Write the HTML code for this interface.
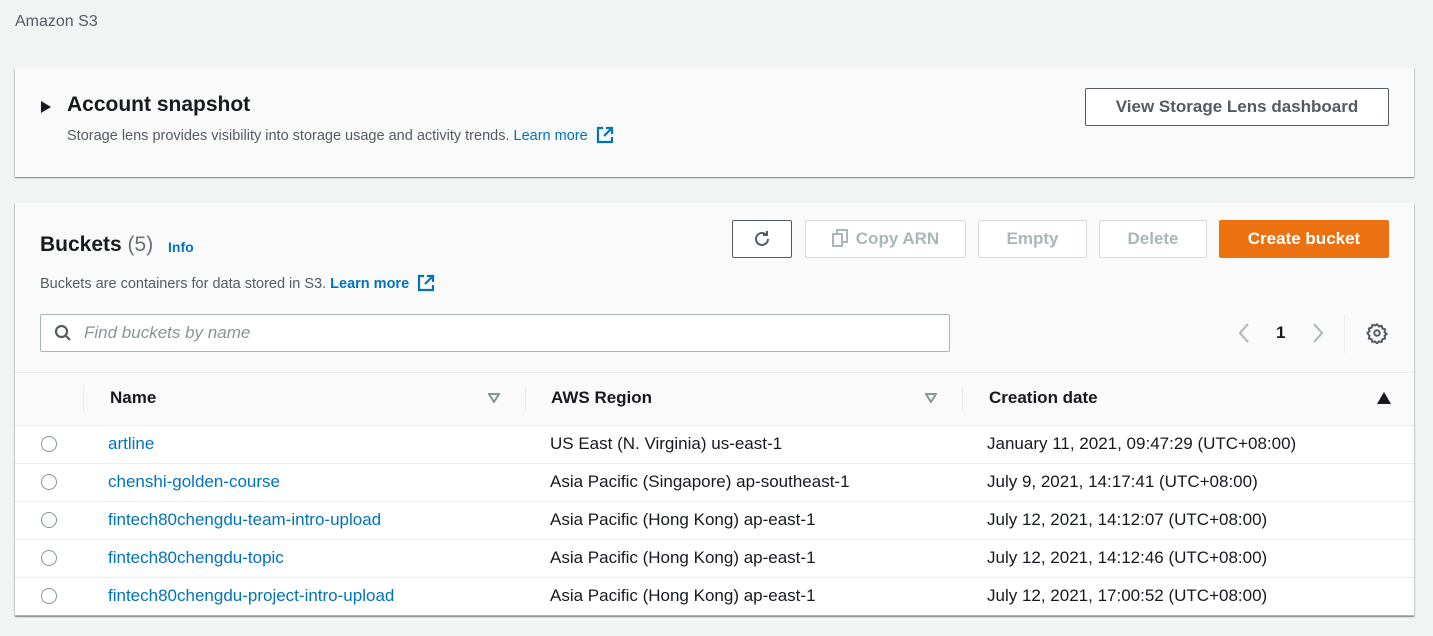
<!DOCTYPE html>
<html><head><style>
*{box-sizing:border-box;margin:0;padding:0}
body{width:1433px;height:636px;background:#f2f3f3;font-family:"Liberation Sans",sans-serif;color:#16191f;position:relative;overflow:hidden}
.a{position:absolute}
.panel{position:absolute;left:15px;width:1399px;background:#fafafa;box-shadow:0 1px 1px 0 rgba(0,28,36,.3),1px 1px 1px 0 rgba(0,28,36,.15),-1px 1px 1px 0 rgba(0,28,36,.15)}
.btn{position:absolute;border:1px solid #d5dbdb;background:#fff;color:#aab7b8;font-weight:bold;font-size:17px;text-align:center;line-height:36px;border-radius:2px;height:38px;top:220px}
.link{color:#0073bb}
.row{position:absolute;left:15px;width:1399px;height:38px;background:#fff;border-top:1px solid #eaeded;font-size:17px}
.row span{position:absolute;top:8px}
.radio{position:absolute;left:26px;top:10px;width:16px;height:16px;border:1px solid #879596;border-radius:50%;background:#fff}
.ext{display:inline-block;vertical-align:-4px;margin-left:8px}
</style></head><body>
<div class="a" style="left:15px;top:13px;font-size:16px;color:#545b64">Amazon S3</div>

<div class="panel" style="top:68px;height:109px">
 <div class="a" style="left:26px;top:33px;width:0;height:0;border-left:10px solid #16191f;border-top:6px solid transparent;border-bottom:6px solid transparent"></div>
 <div class="a" style="left:52px;top:25px;font-size:21px;font-weight:bold">Account snapshot</div>
 <div class="a" style="left:52px;top:58px;font-size:14.5px;color:#545b64;white-space:nowrap">Storage lens provides visibility into storage usage and activity trends. <span class="link">Learn more</span><svg class="ext" width="18" height="18" viewBox="0 0 18 18" fill="none" stroke="#0073bb" stroke-width="2.2"><path d="M7 2H2v14h14v-5M10 2h6v6M16 2L8 10"/></svg></div>
 <div class="a" style="left:1070px;top:20px;width:304px;height:38px;border:1px solid #545b64;border-radius:2px;background:#fff;font-weight:bold;font-size:17px;text-align:center;line-height:36px;color:#545b64">View Storage Lens dashboard</div>
</div>

<div class="panel" style="top:203px;height:413px;background:#fafafa"></div>
<div class="a" style="left:40px;top:233px;font-size:21px;font-weight:bold">Buckets <span style="font-weight:normal;color:#687078">(5)</span></div>
<div class="a link" style="left:168px;top:239px;font-size:14px;font-weight:bold">Info</div>
<div class="a" style="left:40px;top:274px;font-size:14.5px;color:#545b64;white-space:nowrap">Buckets are containers for data stored in S3. <span class="link" style="font-weight:bold">Learn more</span><svg class="ext" width="18" height="18" viewBox="0 0 18 18" fill="none" stroke="#0073bb" stroke-width="2.2"><path d="M7 2H2v14h14v-5M10 2h6v6M16 2L8 10"/></svg></div>

<div class="btn" style="left:732px;width:60px;border-color:#545b64"><svg style="margin-top:8px" width="20" height="20" viewBox="0 0 20 20" fill="none" stroke="#545b64" stroke-width="2"><path d="M16 10a6 6 0 1 1-2-4.5"/><path d="M15 2v4h-4" /></svg></div>
<div class="btn" style="left:805px;width:161px"><svg width="16" height="18" viewBox="0 0 16 18" fill="none" stroke="#aab7b8" stroke-width="2" style="vertical-align:-3px;margin-right:8px"><rect x="1" y="5" width="9" height="12"/><path d="M5 5V1h10v12h-5"/></svg>Copy ARN</div>
<div class="btn" style="left:978px;width:109px">Empty</div>
<div class="btn" style="left:1099px;width:108px">Delete</div>
<div class="btn" style="left:1219px;width:170px;background:#ec7211;border-color:#ec7211;color:#fff">Create bucket</div>

<div class="a" style="left:40px;top:314px;width:910px;height:38px;border:1px solid #aab7b8;border-radius:2px;background:#fff"></div>
<svg class="a" style="left:54px;top:324px" width="18" height="18" viewBox="0 0 18 18" fill="none" stroke="#545b64" stroke-width="2.2"><circle cx="7.5" cy="7.5" r="5.5"/><path d="M11.5 11.5L16 16"/></svg>
<div class="a" style="left:84px;top:323px;font-size:17px;font-style:italic;color:#879596">Find buckets by name</div>
<svg class="a" style="left:1237px;top:322px" width="14" height="22" viewBox="0 0 14 22" fill="none" stroke="#aab7b8" stroke-width="2"><path d="M11 2L3 11l8 9"/></svg>
<div class="a" style="left:1276px;top:323px;font-size:17px;font-weight:bold">1</div>
<svg class="a" style="left:1311px;top:322px" width="14" height="22" viewBox="0 0 14 22" fill="none" stroke="#aab7b8" stroke-width="2"><path d="M3 2l8 9-8 9"/></svg>
<div class="a" style="left:1344px;top:315px;width:1px;height:38px;background:#eaeded"></div>
<svg class="a" style="left:1366px;top:322px" width="22" height="22" viewBox="0 0 24 24" fill="none" stroke="#545b64" stroke-width="2.2"><circle cx="12" cy="12" r="3"/><path d="M12 2.5l2 2.3 3-.6.9 2.9 2.9.9-.6 3 2.3 2-2.3 2 .6 3-2.9.9-.9 2.9-3-.6-2 2.3-2-2.3-3 .6-.9-2.9-2.9-.9.6-3L1.5 12l2.3-2-.6-3 2.9-.9.9-2.9 3 .6z"/></svg>

<div class="a" style="left:15px;top:372px;width:1399px;height:53px;border-top:1px solid #eaeded;background:#fafafa;font-size:17px;font-weight:bold">
 <div class="a" style="left:68px;top:13px;width:1px;height:26px;background:#eaeded"></div>
 <div class="a" style="left:95px;top:15px">Name</div>
 <svg class="a" style="left:473px;top:20px" width="12" height="10" viewBox="0 0 12 10"><path d="M1 1h10L6 9z" fill="none" stroke="#879596" stroke-width="2"/></svg>
 <div class="a" style="left:510px;top:13px;width:1px;height:26px;background:#eaeded"></div>
 <div class="a" style="left:536px;top:15px">AWS Region</div>
 <svg class="a" style="left:910px;top:20px" width="12" height="10" viewBox="0 0 12 10"><path d="M1 1h10L6 9z" fill="none" stroke="#879596" stroke-width="2"/></svg>
 <div class="a" style="left:947px;top:13px;width:1px;height:26px;background:#eaeded"></div>
 <div class="a" style="left:974px;top:15px">Creation date</div>
 <svg class="a" style="left:1362px;top:19px" width="14" height="12" viewBox="0 0 14 12"><path d="M0 12h14L7 0z" fill="#16191f"/></svg>
</div>

<div class="row" style="top:425px"><div class="radio"></div><span class="link" style="left:93px">artline</span><span style="left:535px">US East (N. Virginia) us-east-1</span><span style="left:972px">January 11, 2021, 09:47:29 (UTC+08:00)</span></div>
<div class="row" style="top:463px"><div class="radio"></div><span class="link" style="left:93px">chenshi-golden-course</span><span style="left:535px">Asia Pacific (Singapore) ap-southeast-1</span><span style="left:972px">July 9, 2021, 14:17:41 (UTC+08:00)</span></div>
<div class="row" style="top:501px"><div class="radio"></div><span class="link" style="left:93px">fintech80chengdu-team-intro-upload</span><span style="left:535px">Asia Pacific (Hong Kong) ap-east-1</span><span style="left:972px">July 12, 2021, 14:12:07 (UTC+08:00)</span></div>
<div class="row" style="top:539px"><div class="radio"></div><span class="link" style="left:93px">fintech80chengdu-topic</span><span style="left:535px">Asia Pacific (Hong Kong) ap-east-1</span><span style="left:972px">July 12, 2021, 14:12:46 (UTC+08:00)</span></div>
<div class="row" style="top:577px;height:39px;border-bottom:1px solid #aab7b8"><div class="radio"></div><span class="link" style="left:93px">fintech80chengdu-project-intro-upload</span><span style="left:535px">Asia Pacific (Hong Kong) ap-east-1</span><span style="left:972px">July 12, 2021, 17:00:52 (UTC+08:00)</span></div>
</body></html>
